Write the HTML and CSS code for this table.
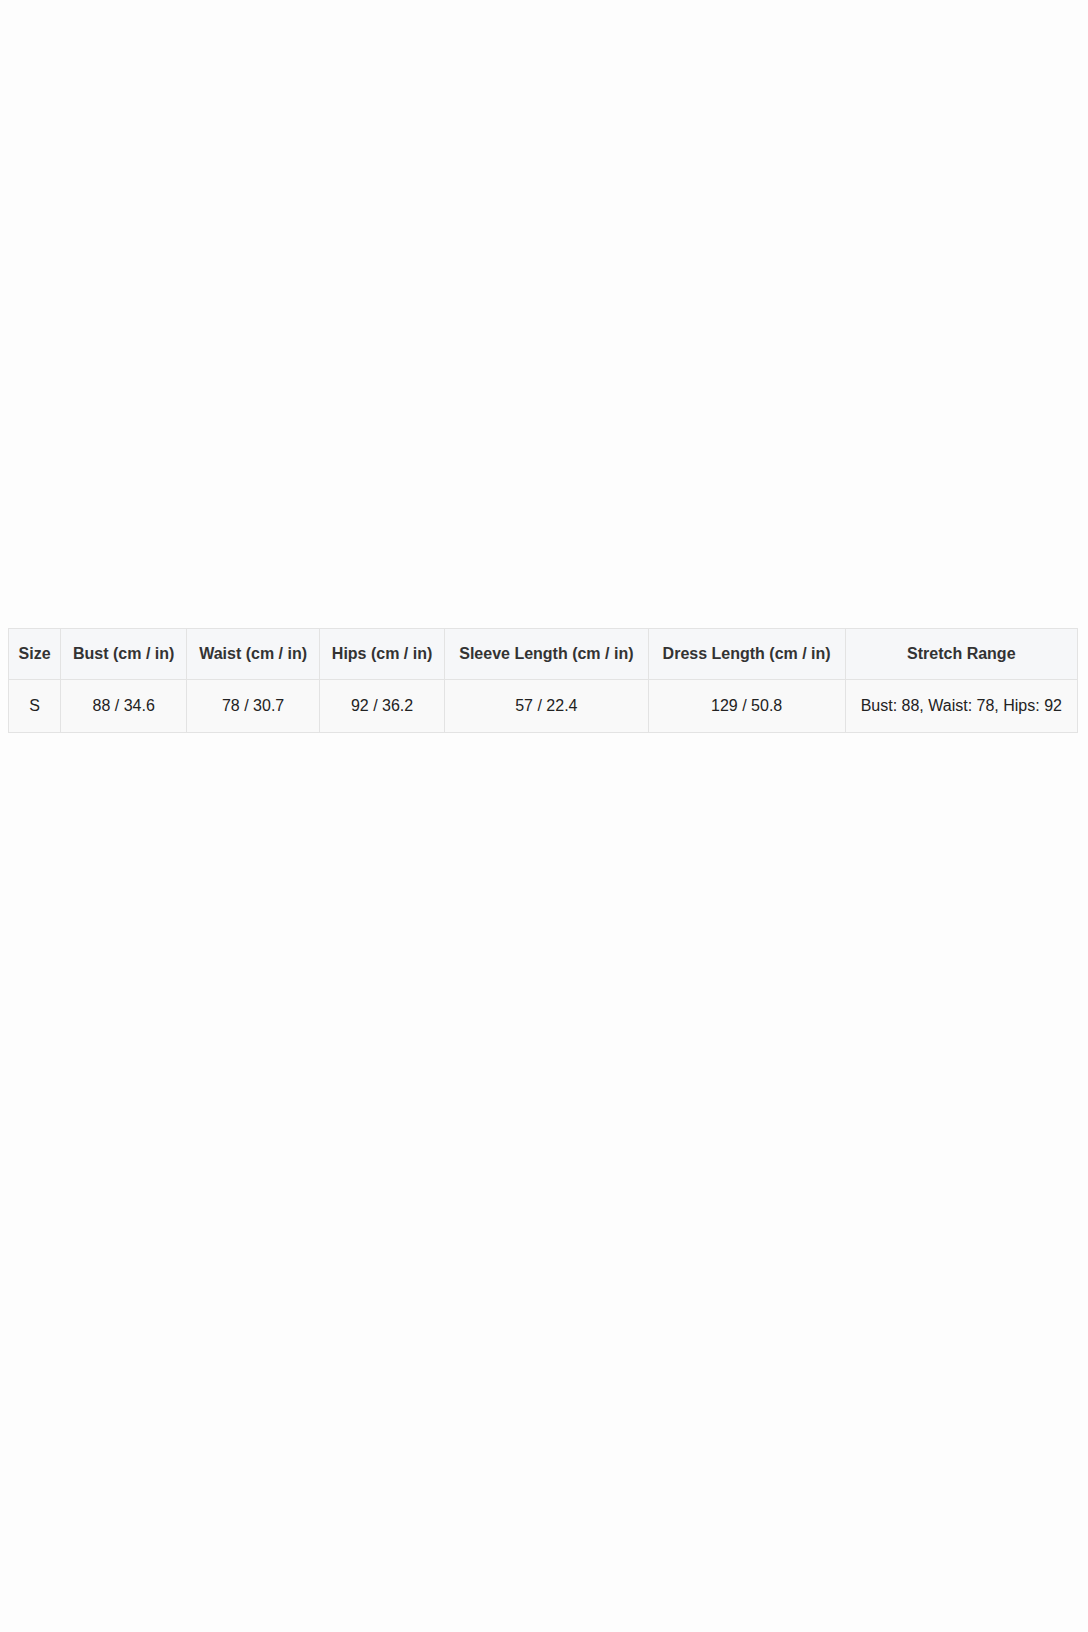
FILE: index.html
```html
<!DOCTYPE html>
<html lang="en">
<head>
<meta charset="utf-8">
<title>Size Chart</title>
<link rel="stylesheet" href="styles.css">
</head>
<body>
<div class="chart">
  <table class="size-table">
    <thead>
      <tr>
        <th>Size</th>
        <th>Bust (cm / in)</th>
        <th>Waist (cm / in)</th>
        <th>Hips (cm / in)</th>
        <th>Sleeve Length (cm / in)</th>
        <th>Dress Length (cm / in)</th>
        <th>Stretch Range</th>
      </tr>
    </thead>
    <tbody>
      <tr>
        <td>S</td>
        <td>88 / 34.6</td>
        <td>78 / 30.7</td>
        <td>92 / 36.2</td>
        <td>57 / 22.4</td>
        <td>129 / 50.8</td>
        <td>Bust: 88, Waist: 78, Hips: 92</td>
      </tr>
    </tbody>
  </table>
</div>
</body>
</html>
```

FILE: styles.css
```css
html, body {
  background: #fdfdfd;
}
body {
  margin: 0;
  font-family: "Liberation Sans", Arial, sans-serif;
}
.chart {
  padding: 628px 10px 0 8px;
}
.size-table {
  width: 100%;
  border-collapse: collapse;
  font-size: 16px;
  color: #222;
}
.size-table th,
.size-table td {
  border: 1px solid #e3e3e3;
  text-align: center;
  padding: 16px 8px;
  line-height: 18px;
  white-space: nowrap;
}
.size-table th {
  background: #f6f7f9;
  font-weight: bold;
  color: #333;
}
.size-table td {
  background: #f9f9f9;
  padding: 17px 8px;
}
```
